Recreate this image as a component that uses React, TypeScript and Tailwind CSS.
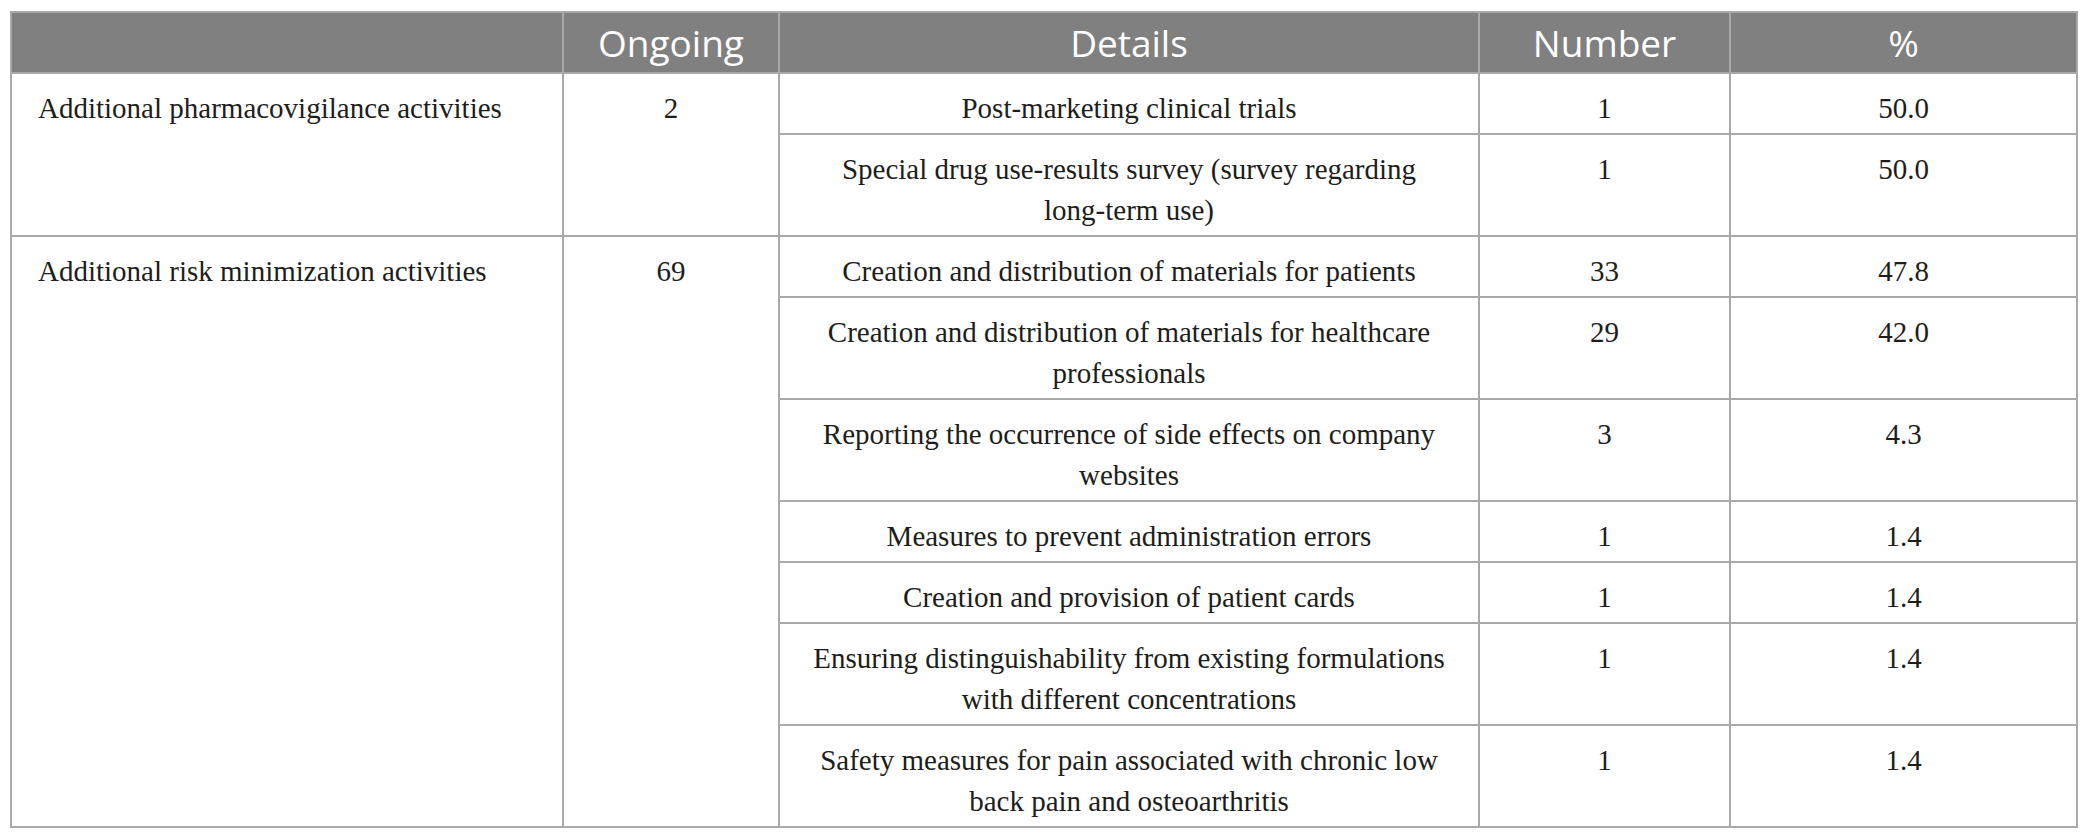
import type { ReactNode } from "react";

type Row = { detail: ReactNode; number: string; pct: string };

const groups: { name: string; ongoing: string; rows: Row[] }[] = [
  {
    name: "Additional pharmacovigilance activities",
    ongoing: "2",
    rows: [
      { detail: "Post-marketing clinical trials", number: "1", pct: "50.0" },
      {
        detail: (
          <>
            Special drug use-results survey (survey regarding{" "}
            <span className="whitespace-nowrap">long-term</span> use)
          </>
        ),
        number: "1",
        pct: "50.0",
      },
    ],
  },
  {
    name: "Additional risk minimization activities",
    ongoing: "69",
    rows: [
      { detail: "Creation and distribution of materials for patients", number: "33", pct: "47.8" },
      { detail: "Creation and distribution of materials for healthcare professionals", number: "29", pct: "42.0" },
      { detail: "Reporting the occurrence of side effects on company websites", number: "3", pct: "4.3" },
      { detail: "Measures to prevent administration errors", number: "1", pct: "1.4" },
      { detail: "Creation and provision of patient cards", number: "1", pct: "1.4" },
      { detail: "Ensuring distinguishability from existing formulations with different concentrations", number: "1", pct: "1.4" },
      { detail: "Safety measures for pain associated with chronic low back pain and osteoarthritis", number: "1", pct: "1.4" },
    ],
  },
];

const cell = "border-2 border-[#a9a9a9] align-top pt-[14px] pb-[4px] text-center";
const head = "border-2 border-[#a9a9a9] h-[61px] p-0 text-center font-normal";

export default function App() {
  return (
    <div className="bg-white w-full min-h-screen pt-[11px] pl-[10px]">
      <table
        className="border-collapse w-[2066px] table-fixed text-[29px] leading-[41px] text-[#1d1d1b]"
        style={{ fontFamily: '"Liberation Serif", serif' }}
      >
        <colgroup>
          <col className="w-[552px]" />
          <col className="w-[216px]" />
          <col className="w-[700px]" />
          <col className="w-[251px]" />
          <col className="w-[347px]" />
        </colgroup>
        <thead>
          <tr
            className="bg-[#808080] text-white text-[37px] leading-[40px]"
            style={{ fontFamily: '"Open Sans", sans-serif' }}
          >
            <th className={head}></th>
            <th className={head}>Ongoing</th>
            <th className={head}>Details</th>
            <th className={head}>Number</th>
            <th className={head}>%</th>
          </tr>
        </thead>
        <tbody>
          {groups.map((g) =>
            g.rows.map((r, i) => (
              <tr key={g.name + i}>
                {i === 0 && (
                  <>
                    <td rowSpan={g.rows.length} className={cell + " !text-left pl-[26px]"}>
                      {g.name}
                    </td>
                    <td rowSpan={g.rows.length} className={cell}>
                      {g.ongoing}
                    </td>
                  </>
                )}
                <td className={cell + " px-[10px]"}>{r.detail}</td>
                <td className={cell}>{r.number}</td>
                <td className={cell}>{r.pct}</td>
              </tr>
            ))
          )}
        </tbody>
      </table>
    </div>
  );
}
